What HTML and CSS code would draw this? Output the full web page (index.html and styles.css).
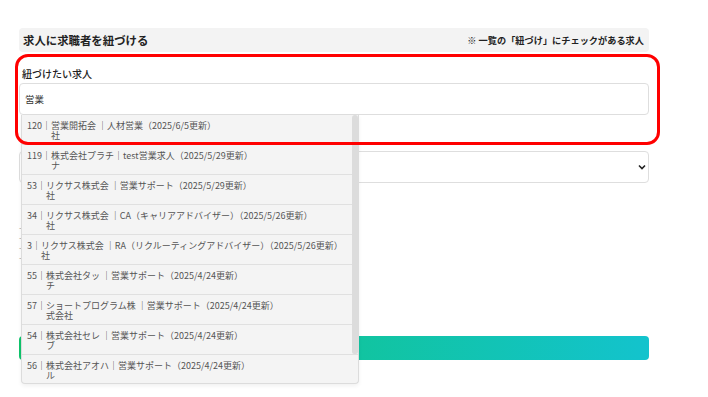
FILE: index.html
```html
<!DOCTYPE html>
<html lang="ja">
<head>
    <meta charset="UTF-8">
    <meta name="viewport" content="width=device-width, initial-scale=1.0">
    <title>求人に求職者を紐づける</title>
    <link rel="stylesheet" href="styles.css">
</head>
<body>

<div class="link-panel">
    <div class="panel-head">
        <h2>求人に求職者を紐づける</h2>
        <span class="panel-note">※ 一覧の「紐づけ」にチェックがある求人</span>
    </div>

    <!-- 求人の検索 -->
    <div class="field field-job">
        <label for="job-search">紐づけたい求人</label>
        <input type="text" id="job-search" value="営業">

        <div class="suggest">
            <ul>
                <li><span class="s-id">120｜</span><span class="s-co">営業開拓会&nbsp;<br>社</span><span class="s-title">｜人材営業（2025/6/5更新）</span></li>
                <li><span class="s-id">119｜</span><span class="s-co">株式会社プラチ<br>ナ</span><span class="s-title">｜test営業求人（2025/5/29更新）</span></li>
                <li><span class="s-id">53｜</span><span class="s-co">リクサス株式会&nbsp;<br>社</span><span class="s-title">｜営業サポート（2025/5/29更新）</span></li>
                <li><span class="s-id">34｜</span><span class="s-co">リクサス株式会&nbsp;<br>社</span><span class="s-title">｜CA（キャリアアドバイザー）（2025/5/26更新）</span></li>
                <li><span class="s-id">3｜</span><span class="s-co">リクサス株式会&nbsp;<br>社</span><span class="s-title">｜RA（リクルーティングアドバイザー）（2025/5/26更新）</span></li>
                <li><span class="s-id">55｜</span><span class="s-co">株式会社タッ&nbsp;<br>チ</span><span class="s-title">｜営業サポート（2025/4/24更新）</span></li>
                <li><span class="s-id">57｜</span><span class="s-co">ショートプログラム株&nbsp;<br>式会社</span><span class="s-title">｜営業サポート（2025/4/24更新）</span></li>
                <li><span class="s-id">54｜</span><span class="s-co">株式会社セレ&nbsp;<br>ブ</span><span class="s-title">｜営業サポート（2025/4/24更新）</span></li>
                <li><span class="s-id">56｜</span><span class="s-co">株式会社アオハ<br>ル</span><span class="s-title">｜営業サポート（2025/4/24更新）</span></li>
            </ul>
            <div class="suggest-thumb"></div>
        </div>
    </div>

    <!-- 求職者の選択 -->
    <div class="field">
        <label for="seeker">紐づける求職者</label>
        <select id="seeker">
            <option></option>
        </select>
    </div>

    <div class="field">
        <label>メモ</label>
        <div class="memo-lines">
            <p>- 面談日程</p>
            <p>- 希望条件</p>
            <p>- 推薦コメント</p>
            <p>- 備考</p>
        </div>
    </div>

    <button class="link-btn">紐づける</button>

    <!-- 注目枠 -->
    <div class="focus-ring"></div>
</div>

</body>
</html>
```

FILE: styles.css
```css
html,
body {
    min-height: 100vh;
}

body {
    font-family: 'Noto Sans CJK JP', 'Noto Sans', sans-serif;
    margin: 0;
    padding: 0;
    background: #fff;
    color: #333;
}

.link-panel {
    position: relative;
    width: 630px;
    margin: 28px 0 0 19px;
    padding-bottom: 40px;
}

.panel-head {
    display: flex;
    justify-content: space-between;
    align-items: center;
    height: 24px;
    padding: 0 5px 0 4px;
    background-color: #f3f3f3;
    border-radius: 4px;
    margin-bottom: 15px;
}

.panel-head h2 {
    margin: 0;
    font-size: 11.4px;
    font-weight: bold;
    color: #222;
}

.panel-note {
    font-size: 9.2px;
    font-weight: bold;
    color: #222;
}

.field {
    position: relative;
    margin-bottom: 20px;
}

.field label {
    display: block;
    font-size: 10px;
    line-height: 14px;
    font-weight: 500;
    color: #222;
    margin-bottom: 2px;
    padding-left: 3px;
}

.field input,
.field select {
    display: block;
    box-sizing: border-box;
    width: 100%;
    height: 32px;
    padding: 0 5px;
    border: 1px solid #dedede;
    border-radius: 4px;
    background: #fff;
    font-family: inherit;
    font-size: 9.5px;
    color: #333;
}

.field select {
    appearance: none;
    background-image: url("data:image/svg+xml;utf8,<svg xmlns='http://www.w3.org/2000/svg' width='8' height='6' viewBox='0 0 8 6'><path d='M1 1.5l3 3 3-3' fill='none' stroke='%23222' stroke-width='1.6'/></svg>");
    background-repeat: no-repeat;
    background-position: right 2px center;
}

.memo-lines {
    padding-top: 4px;
}

.memo-lines p {
    margin: 0;
    font-size: 9px;
    line-height: 10px;
    color: #aaa;
}

.suggest {
    position: absolute;
    top: 100%;
    left: 2px;
    z-index: 5;
    width: 338px;
    height: 269px;
    overflow: hidden;
    box-sizing: border-box;
    background: #f4f4f4;
    border: 1px solid #dcdcdc;
    border-top: none;
    border-radius: 0 0 4px 4px;
    box-shadow: 0 2px 4px rgba(0, 0, 0, 0.06);
}

.suggest ul {
    list-style: none;
    margin: 0;
    padding: 0;
}

.suggest li {
    display: flex;
    align-items: flex-start;
    height: 30px;
    box-sizing: border-box;
    padding: 6px 5px 0;
    border-bottom: 1px solid #e0e0e0;
    font-size: 9px;
    line-height: 10px;
    color: #555;
    white-space: nowrap;
}

.suggest li:last-child {
    border-bottom: none;
}

.s-co {
    display: inline-block;
}

/* スクロールバーのつまみ */
.suggest-thumb {
    position: absolute;
    top: 0;
    right: 0;
    width: 6px;
    height: 239px;
    background: #dcdcdc;
    border-radius: 3px 3px 2px 2px;
}

.link-btn {
    display: block;
    width: 100%;
    height: 24px;
    margin-top: 73px;
    border: none;
    border-radius: 4px;
    background: linear-gradient(90deg, #0fc56c, #13c3cd);
    color: #fff;
    font-family: inherit;
    font-size: 10px;
    font-weight: bold;
}

.focus-ring {
    position: absolute;
    top: 26px;
    left: -4px;
    width: 645px;
    height: 91px;
    box-sizing: border-box;
    border: 3px solid #f00;
    border-radius: 13px;
    z-index: 10;
    pointer-events: none;
}
```
